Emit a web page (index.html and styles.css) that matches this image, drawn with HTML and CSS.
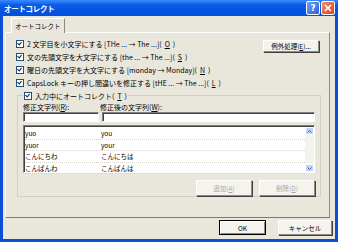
FILE: index.html
```html
<!DOCTYPE html>
<html lang="ja">
<head>
	<meta charset="UTF-8">
	<title>オートコレクト</title>
	<link rel="stylesheet" href="styles.css">
</head>
<body>
	<div class="window">
		<div class="titlebar">
			<span class="title">オートコレクト</span>
			<span class="tb-btn help">?</span>
			<span class="tb-btn close">
				<svg width="8" height="8" viewBox="0 0 8 8"><path d="M1 1L7 7M7 1L1 7" stroke="#fff" stroke-width="1.6"/></svg>
			</span>
		</div>

		<div class="content">
			<div class="tabs">
				<span class="tab">オートコレクト</span>
			</div>

			<div class="panel">
				<div class="top-options">
					<div class="options">
						<label class="opt"><span class="check"></span>2 文字目を小文字にする [THe ... → The ...](<u>O</u>)</label>
						<label class="opt"><span class="check"></span>文の先頭文字を大文字にする [the ... → The ...](<u>S</u>)</label>
						<label class="opt"><span class="check"></span>曜日の先頭文字を大文字にする [monday → Monday](<u>N</u>)</label>
						<label class="opt"><span class="check"></span>CapsLock キーの押し間違いを修正する [tHE ... → The ...](<u>L</u>)</label>
					</div>
					<button class="btn btn-except">例外処理(<u>E</u>)...</button>
				</div>

				<fieldset class="group">
					<legend><label class="opt"><span class="check"></span>入力中にオートコレクト(<u>T</u>)</label></legend>

					<div class="field-labels">
						<span class="col-a">修正文字列(<u>R</u>):</span>
						<span class="col-b">修正後の文字列(<u>W</u>):</span>
					</div>
					<div class="field-inputs">
						<span class="input col-a"></span>
						<span class="input col-b"></span>
					</div>

					<div class="list">
						<div class="rows">
							<div class="row"><span class="col-a">yuo</span><span>you</span></div>
							<div class="row"><span class="col-a">yuor</span><span>your</span></div>
							<div class="row"><span class="col-a">こんにちわ</span><span>こんにちは</span></div>
							<div class="row"><span class="col-a">こんばんわ</span><span>こんばんは</span></div>
						</div>
						<div class="scrollbar">
							<span class="arrow">
								<svg width="5" height="3" viewBox="0 0 5 3"><path d="M0.5 2.5L2.5 0.5L4.5 2.5" fill="none" stroke="#4d6185" stroke-width="1"/></svg>
							</span>
							<span class="arrow">
								<svg width="5" height="3" viewBox="0 0 5 3"><path d="M0.5 0.5L2.5 2.5L4.5 0.5" fill="none" stroke="#4d6185" stroke-width="1"/></svg>
							</span>
						</div>
					</div>

					<div class="group-buttons">
						<button class="btn btn-small" disabled>追加(<u>A</u>)</button>
						<button class="btn btn-small" disabled>削除(<u>D</u>)</button>
					</div>
				</fieldset>
			</div>

			<div class="dialog-buttons">
				<button class="btn btn-ok">OK</button>
				<button class="btn btn-cancel">キャンセル</button>
			</div>
		</div>
	</div>
</body>
</html>
```

FILE: styles.css
```css
body {
	margin: 0;
	font-family: "Noto Sans CJK JP", sans-serif;
	font-size: 7px;
	color: #000;
}
.window {
	width: 338px;
	height: 242px;
	box-sizing: border-box;
	background-color: #0a4fd6;
	padding: 0 3px 3px 3px;
	display: flex;
	flex-direction: column;
}
.titlebar {
	height: 16px;
	margin: 0 -3px;
	padding: 0 3px 0 4px;
	display: flex;
	align-items: center;
	gap: 1px;
	background: linear-gradient(#3a8cff, #0a5ce6 30%, #0250e0 80%, #0a4fd6);
}
.title {
	flex: 1;
	color: #fff;
	font-weight: bold;
	font-size: 7.5px;
	letter-spacing: -0.3px;
}
.tb-btn {
	width: 12px;
	height: 12px;
	border: 1px solid #fff;
	border-radius: 2px;
	display: flex;
	align-items: center;
	justify-content: center;
	color: #fff;
	font-family: "DejaVu Sans", sans-serif;
	font-weight: bold;
	font-size: 9px;
}
.help {
	background: linear-gradient(135deg, #6d9cf6, #2a62e0);
}
.close {
	background: linear-gradient(135deg, #f08d6e, #d8441e);
}
.content {
	flex: 1;
	background-color: #e9e7dc;
	display: flex;
	flex-direction: column;
	padding: 2px 3px 0 2px;
}
.tabs {
	display: flex;
	padding-left: 6px;
	height: 14px;
}
.tab {
	padding: 2px 3px 0 3px;
	border: 1px solid #fff;
	border-right-color: #8c8a80;
	border-bottom: none;
	margin-bottom: -1px;
	background-color: #e9e7dc;
	position: relative;
	font-size: 6.5px;
}
.panel {
	height: 186px;
	width: 325px;
	box-sizing: border-box;
	border: 1px solid #fff;
	border-right-color: #8c8a80;
	border-bottom-color: #7a786f;
	padding: 4px 10px 0 10px;
}
.top-options {
	display: flex;
	justify-content: space-between;
}
.options {
	display: flex;
	flex-direction: column;
}
.opt {
	display: flex;
	align-items: center;
	gap: 3px;
	height: 13px;
	white-space: nowrap;
}
.check {
	width: 6px;
	height: 6px;
	border: 1px solid #1c5180;
	background-color: #fff;
	position: relative;
}
.check::after {
	content: "";
	position: absolute;
	left: 1px;
	top: 0;
	width: 2px;
	height: 3px;
	border: solid #21a121;
	border-width: 0 1.3px 1.3px 0;
	transform: rotate(40deg);
	border-color: #222;
}
.btn {
	font-family: "Noto Sans CJK JP", sans-serif;
	font-size: 6.5px;
	background-color: #f4f3ee;
	border: 1px solid;
	border-color: #fff #8c8a80 #8c8a80 #fff;
	box-shadow: 1px 1px 0 #404040;
	padding: 0;
	color: #000;
}
.btn[disabled] {
	color: #aca899;
}
.btn-except {
	width: 56px;
	height: 12px;
	margin-top: 3px;
	margin-right: 0;
}
.group {
	margin: 0 0 0 1px;
	width: 304px;
	box-sizing: border-box;
	height: 108px;
	border: 1px solid #d0d0bf;
	padding: 0 5px 0 5px;
}
.group legend {
	padding: 0 1px;
	margin-left: 0;
}
.field-labels, .field-inputs {
	display: flex;
	gap: 3px;
}
.field-labels {
	height: 9px;
	align-items: center;
}
.col-a {
	width: 74px;
	flex-shrink: 0;
}
.col-b {
	flex: 1;
}
.field-inputs {
	height: 10px;
	margin-top: 1px;
}
.input {
	background-color: #fff;
	border: 1px solid #7f9db9;
	border-color: #808080 #fff #fff #808080;
	box-shadow: inset 1px 1px 0 #404040;
}
.list {
	margin-top: 3px;
	height: 48px;
	background-color: #fff;
	border: 1px solid;
	border-color: #808080 #fff #fff #808080;
	box-shadow: inset 1px 1px 0 #404040;
	display: flex;
	padding: 2px 0 0 0;
	box-sizing: border-box;
}
.rows {
	flex: 1;
	padding-left: 1px;
}
.row {
	display: flex;
	height: 11.5px;
	align-items: center;
	border-bottom: 1px dotted #d8d4cc;
	box-sizing: border-box;
	gap: 3px;
	font-size: 6.5px;
}
.row .col-a {
	width: 73px;
}
.scrollbar {
	width: 9px;
	display: flex;
	flex-direction: column;
	justify-content: space-between;
	background-color: #f3f3ee;
	margin: -1px 0 0 0;
}
.arrow {
	height: 8px;
	background-color: #c3d3fd;
	border: 1px solid #fff;
	border-radius: 1px;
	display: flex;
	align-items: center;
	justify-content: center;
	box-sizing: border-box;
}
.group-buttons {
	display: flex;
	justify-content: flex-end;
	gap: 7px;
	margin-top: 7px;
}
.btn-small {
	width: 56px;
	height: 16px;
}
.dialog-buttons {
	display: flex;
	justify-content: flex-end;
	gap: 12px;
	margin-top: 2px;
	padding-right: 0;
}
.btn-ok {
	width: 47px;
	height: 15px;
	border-color: #000;
	box-shadow: inset 1px 1px 0 #fff, inset -1px -1px 0 #8c8a80;
}
.btn-cancel {
	width: 54px;
	height: 15px;
}
```
